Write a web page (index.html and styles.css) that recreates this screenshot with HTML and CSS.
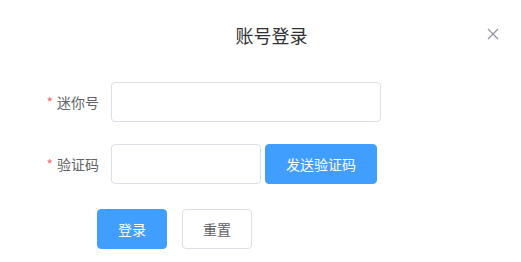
FILE: index.html
```html
<!DOCTYPE html>
<html>
<head>
<meta charset="utf-8">
<link rel="stylesheet" href="styles.css">
</head>
<body>
<div class="dialog">
  <div class="header">
    <span class="title">账号登录</span>
    <button class="close" aria-label="close">
      <svg width="12" height="12" viewBox="0 0 12 12"><path d="M1 1L11 11M11 1L1 11" stroke="#909399" stroke-width="1.2" fill="none"/></svg>
    </button>
  </div>
  <form class="form">
    <div class="item">
      <label class="label"><span class="req">*</span>迷你号</label>
      <input class="input wide" type="text">
    </div>
    <div class="item">
      <label class="label"><span class="req">*</span>验证码</label>
      <input class="input narrow" type="text">
      <button type="button" class="btn primary send">发送验证码</button>
    </div>
    <div class="actions">
      <button type="button" class="btn primary">登录</button>
      <button type="button" class="btn plain">重置</button>
    </div>
  </form>
</div>
</body>
</html>
```
FILE: styles.css
```css
html, body {
  margin: 0;
  padding: 0;
  background: #fff;
}
body {
  font-family: "Noto Sans CJK SC", "Microsoft YaHei", sans-serif;
  width: 521px;
  height: 262px;
  overflow: hidden;
}
.dialog {
  position: relative;
  width: 521px;
}
.header {
  display: flex;
  justify-content: center;
  padding: 22px 0 0 22px;
  height: 26px;
}
.title {
  font-size: 18px;
  line-height: 26px;
  color: #303133;
}
.close {
  position: absolute;
  top: 28px;
  right: 22px;
  width: 12px;
  height: 12px;
  padding: 0;
  border: 0;
  background: none;
  display: flex;
}
.form {
  margin: 34px 0 0 0;
  padding-left: 11px;
}
.item {
  display: flex;
  align-items: center;
  height: 40px;
  margin-bottom: 22px;
}
.label {
  width: 100px;
  box-sizing: border-box;
  padding-right: 12px;
  text-align: right;
  font-size: 14px;
  color: #606266;
  line-height: 40px;
}
.req {
  color: #f56c6c;
  margin-right: 4px;
}
.input {
  box-sizing: border-box;
  height: 40px;
  border: 1px solid #dcdfe6;
  border-radius: 4px;
  padding: 0 15px;
  font-size: 14px;
  outline: none;
  margin: 0;
}
.wide { width: 270px; }
.narrow { width: 150px; }
.btn {
  box-sizing: border-box;
  height: 40px;
  padding: 0 20px;
  border-radius: 4px;
  font-size: 14px;
  font-family: inherit;
  border: 1px solid #409eff;
  cursor: pointer;
}
.primary {
  background: #409eff;
  color: #fff;
}
.plain {
  background: #fff;
  color: #606266;
  border-color: #dcdfe6;
}
.send {
  margin-left: 4px;
  width: 112px;
  padding: 0;
}
.actions {
  display: flex;
  gap: 15px;
  margin-top: 25px;
  margin-left: 86px;
}
.actions .btn {
  width: 70px;
  padding: 0;
}
```
